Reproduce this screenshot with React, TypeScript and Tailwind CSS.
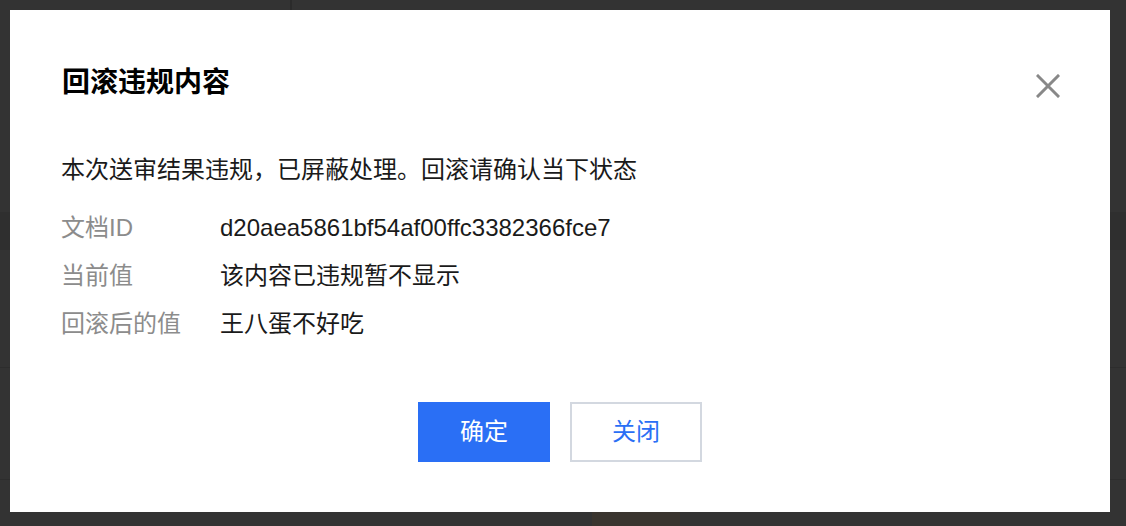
import React from "react";

const font = { fontFamily: '"Liberation Sans", "Noto Sans CJK SC", sans-serif' };

function Background() {
  return (
    <div className="flex h-[526px] w-[1126px] flex-col bg-[#333333]">
      <div className="flex h-[214px]">
        <div className="w-[292px] border-r-2 border-[#2b2b2b]" />
        <div className="flex-1" />
      </div>
      <div className="h-[39px] bg-[#2f2f2f]" />
      <div className="h-[119px] border-b border-[#2d2d2d]" />
      <div className="h-[113px] border-b border-[#2d2d2d]" />
      <div className="flex-1 pl-[592px] pt-[26px]">
        <div className="h-[20px] w-[88px] bg-[#3a352f]" />
      </div>
    </div>
  );
}

function CloseIcon() {
  return (
    <svg width="24" height="24" viewBox="0 0 24 24" className="mt-[6px] shrink-0">
      <path d="M2 2 L22 22 M22 2 L2 22" stroke="#888888" strokeWidth="3" strokeLinecap="square" fill="none" />
    </svg>
  );
}

export default function App() {
  const rows: [string, string][] = [
    ["文档ID", "d20aea5861bf54af00ffc3382366fce7"],
    ["当前值", "该内容已违规暂不显示"],
    ["回滚后的值", "王八蛋不好吃"],
  ];
  return (
    <div className="relative h-[526px] w-[1126px] overflow-hidden" style={font}>
      <Background />
      <div className="fixed left-[10px] top-[10px] flex h-[502px] w-[1100px] flex-col bg-white pt-[53px]">
        <div className="flex h-[40px] items-center justify-between pl-[52px] pr-[50px]">
          <div className="text-[28px] font-bold leading-[40px] text-black">回滚违规内容</div>
          <CloseIcon />
        </div>
        <div className="mt-[49px] pl-[51px] text-[24px] leading-[36px] text-[#1a1a1a]">
          本次送审结果违规，已屏蔽处理。回滚请确认当下状态
        </div>
        <div className="mt-[16px] flex flex-col pl-[51px]">
          {rows.map(([k, v]) => (
            <div key={k} className="flex h-[48px] items-center text-[24px] leading-[48px]">
              <div className="w-[159px] text-[#8c8c8c]">{k}</div>
              <div className="text-[#1a1a1a]">{v}</div>
            </div>
          ))}
        </div>
        <div className="mt-[54px] flex justify-center gap-[20px]">
          <button className="flex h-[60px] w-[132px] items-center justify-center bg-[#2a6ff5] text-[24px] text-white">
            确定
          </button>
          <button className="flex h-[60px] w-[132px] items-center justify-center border-2 border-[#d3d8e0] bg-white text-[24px] text-[#2a6ff5]">
            关闭
          </button>
        </div>
      </div>
    </div>
  );
}
